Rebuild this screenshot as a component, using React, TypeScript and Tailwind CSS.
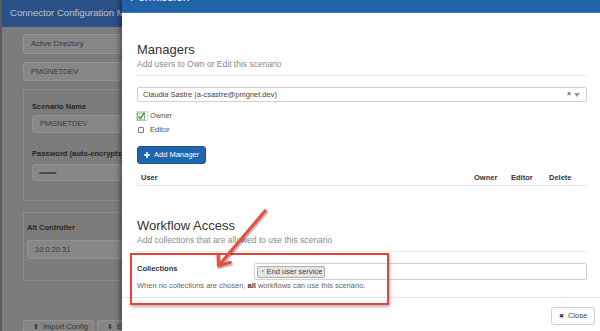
import React from "react";

function PageInput({ text, cls }: { text: string; cls: string }) {
  return (
    <div className={`flex items-center rounded-[2px] border border-[#939393] bg-[#878787] text-[7.5px] text-[#3a3a3a] whitespace-nowrap ${cls}`}>
      {text}
    </div>
  );
}

export default function App() {
  return (
    <div className="relative w-[600px] h-[331px] overflow-hidden bg-[#7c7c7c] font-['Liberation_Sans',Arial,sans-serif]">
      {/* background page (dimmed) */}
      <div className="flex flex-col h-full border-l-2 border-[#5c5c5c]">
        <div className="h-[27px] shrink-0 bg-[#2a5085] flex items-center pl-[8px] text-[9.6px] text-[#b9c6d8] whitespace-nowrap">
          Connector Configuration Manager
        </div>
        <div className="pl-[21px] flex flex-col">
          <PageInput text="Active Directory" cls="mt-[7px] h-[20px] w-[200px] pl-[7px]" />
          <PageInput text="PMGNETDEV" cls="mt-[8px] h-[19px] w-[200px] pl-[7px]" />
          <div className="mt-[8px] h-[112px] w-[200px] border border-[#8b8b8b] pl-[8px] pt-[12px] flex flex-col">
            <div className="h-[10px] leading-[10px] text-[7.5px] font-bold text-[#262626] whitespace-nowrap">Scenario Name</div>
            <PageInput text="PMGNETDEV" cls="mt-[3px] h-[18px] w-[190px] pl-[7px]" />
            <div className="mt-[16px] h-[10px] leading-[10px] text-[7.5px] font-bold text-[#262626] whitespace-nowrap">Password (auto-encrypts)</div>
            <PageInput text="••••••••" cls="mt-[5px] h-[17px] w-[190px] pl-[6px] tracking-[-0.5px] text-[6px]" />
          </div>
          <div className="mt-[11px] h-[69px] w-[200px] border border-[#8b8b8b] pl-[3px] pt-[10px] flex flex-col">
            <div className="h-[10px] leading-[10px] text-[7.5px] font-bold text-[#262626] whitespace-nowrap">Alt Controller</div>
            <PageInput text="10.0.20.31" cls="mt-[7px] h-[19px] w-[190px] pl-[7px]" />
          </div>
          <div className="mt-[39px] flex gap-[3px]">
            <div className="h-[16px] w-[71px] rounded-[2px] border border-[#939393] bg-[#858585] flex items-start pt-[1px] pl-[9px] gap-[4px] text-[7.5px] leading-[10px] text-[#333] whitespace-nowrap">
              <span className="text-[7px]">⬆</span>Import Config
            </div>
            <div className="h-[16px] w-[71px] rounded-[2px] border border-[#939393] bg-[#858585] flex items-start pt-[1px] pl-[9px] gap-[4px] text-[7.5px] leading-[10px] text-[#333] whitespace-nowrap">
              <span className="text-[7px]">⬇</span>Export Config
            </div>
          </div>
        </div>
      </div>

      {/* modal */}
      <div className="absolute left-[122px] top-0 w-[480px] h-[331px] bg-white shadow-[-2px_0_5px_rgba(0,0,0,0.45)] flex flex-col">
        <div className="h-[13px] shrink-0 bg-[#2063a8] overflow-hidden border-b border-[#3a78b8]">
          <div className="-mt-[10px] pl-[8px] text-[12px] leading-[14px] text-white">Permission</div>
        </div>
        <div className="pl-[15px] pr-[15px] flex flex-col">
          <div className="mt-[29px] h-[15px] leading-[15px] text-[13px] text-[#333]">Managers</div>
          <div className="mt-[2px] h-[11px] leading-[11px] text-[8.5px] text-[#8a8a8a]">Add users to Own or Edit this scenario</div>
          <div className="mt-[5px] border-t border-[#e8e8e8]" />
          <div className="mt-[11px] h-[15px] rounded-[2px] border border-[#cfcfcf] flex items-center pl-[5px] pr-[6px] text-[7.5px] text-[#444]">
            <span className="flex-1">Claudia Sastre (a-csastre@pmgnet.dev)</span>
            <span className="text-[7px] text-[#555] font-bold">×</span>
            <svg width="6" height="4" viewBox="0 0 6 4" className="ml-[3px]"><path d="M0 0 L6 0 L3 4 Z" fill="#999" /></svg>
          </div>
          <div className="mt-[6px] h-[15px] flex items-center text-[7.5px] text-[#555]">
            <div className="w-[13px] h-[10px] relative -ml-[1px] mr-[1px]">
              <svg width="13" height="10" viewBox="0 0 13 10">
                <rect x="0.5" y="0.5" width="11" height="9" fill="none" stroke="#8fa0b0" strokeWidth="0.8" strokeDasharray="1 1" />
                <rect x="1.5" y="2" width="7" height="7" fill="#eef6ee" stroke="#6b9a6b" strokeWidth="0.8" />
                <path d="M2.5 5.5 L4.5 7.5 L8.5 1.5" fill="none" stroke="#3aa23a" strokeWidth="1.4" />
              </svg>
            </div>
            Owner
          </div>
          <div className="h-[14px] flex items-center text-[7.5px] text-[#555]">
            <div className="w-[13px] flex items-center pl-[1px]">
              <div className="w-[6px] h-[6px] border border-[#8a6f8f] rounded-[1px]" />
            </div>
            Editor
          </div>
          <div className="mt-[9px] h-[18px] w-[69px] rounded-[3px] bg-[#2064ab] border border-[#1b5593] flex items-center justify-center gap-[4px] text-[7.5px] text-white whitespace-nowrap">
            <svg width="6" height="6" viewBox="0 0 6 6"><path d="M3 0 V6 M0 3 H6" stroke="white" strokeWidth="1.6" /></svg>
            Add Manager
          </div>
          <div className="mt-[6px] h-[16px] flex items-center border-b border-[#e3e3e3] text-[7.5px] font-bold text-[#333]">
            <div className="flex-1 pl-[4px]">User</div>
            <div className="w-[37px]">Owner</div>
            <div className="w-[38px]">Editor</div>
            <div className="w-[38px]">Delete</div>
          </div>
          <div className="mt-[32px] h-[15px] leading-[15px] text-[13px] text-[#333]">Workflow Access</div>
          <div className="mt-[2px] h-[11px] leading-[11px] text-[8.5px] text-[#8a8a8a]">Add collections that are allowed to use this scenario</div>
          <div className="mt-[5px] border-t border-[#e8e8e8]" />
          <div className="mt-[11px] flex">
            <div className="w-[117px] h-[11px] leading-[11px] text-[7.5px] font-bold text-[#333]">Collections</div>
            <div className="flex-1 h-[17px] rounded-[2px] border border-[#cfcfcf] flex items-center pl-[2px]">
              <div className="h-[12px] rounded-[2px] border border-[#b0b0b0] bg-[#e4e4e4] flex items-center pl-[3px] pr-[2px] gap-[2px] text-[7.5px] text-[#444] whitespace-nowrap">
                <span className="text-[6px] text-[#888]">×</span>End user service
              </div>
            </div>
          </div>
          <div className="mt-[1px] h-[10px] leading-[10px] text-[7.5px] text-[#666] whitespace-nowrap">
            When no collections are chosen, <b className="text-[#333]">all</b> workflows can use this scenario.
          </div>
        </div>
        <div className="mt-[6px] border-t border-[#e5e5e5] flex justify-end pt-[9px] pr-[7px]">
          <div className="h-[18px] w-[44px] rounded-[3px] border border-[#d0d0d0] bg-white flex items-center justify-center gap-[4px] text-[7.5px] text-[#444]">
            <span className="text-[6px] text-[#333]">✖</span>Close
          </div>
        </div>
      </div>

      {/* annotation: red box */}
      <div className="absolute left-[130px] top-[253px] w-[259px] h-[52px] border-2 border-[#e2463a] shadow-[1px_2px_3px_rgba(0,0,0,0.3)] pointer-events-none" />
      {/* annotation: arrow */}
      <svg className="absolute left-0 top-0 pointer-events-none" width="600" height="331" viewBox="0 0 600 331">
        <g stroke="rgba(0,0,0,0.25)" strokeWidth="4" strokeLinecap="round" fill="none" transform="translate(1,1.5)">
          <path d="M265 211 L220 264" />
          <path d="M218 254 L218.5 265.5 L230 262.5" />
        </g>
        <g stroke="#e8503e" strokeWidth="3.2" strokeLinecap="round" strokeLinejoin="round" fill="none">
          <path d="M265 211 L220 264" />
          <path d="M218 254 L218.5 265.5 L230 262.5" />
        </g>
      </svg>
    </div>
  );
}
